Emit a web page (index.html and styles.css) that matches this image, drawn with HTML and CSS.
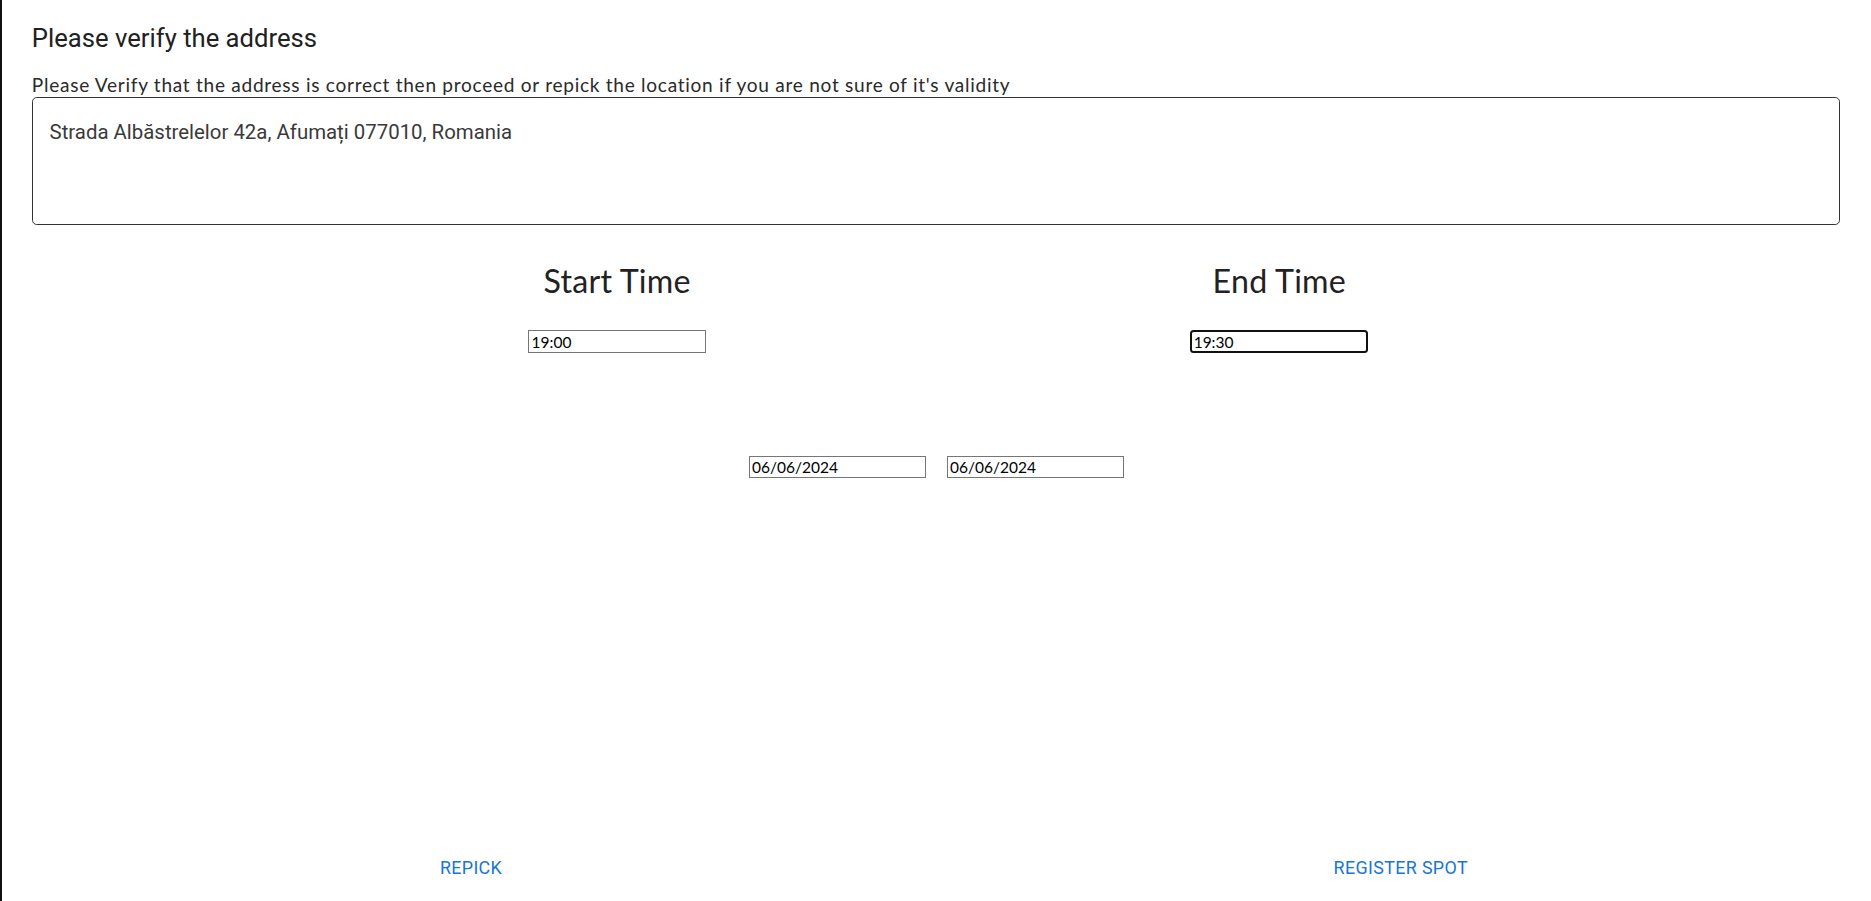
FILE: index.html
```html
<!DOCTYPE html>
<html lang="en">
<head>
<meta charset="utf-8">
<title>Verify address</title>
<link rel="stylesheet" href="styles.css">
</head>
<body>
<main class="page">
  <section class="verify">
    <h2 class="title">Please verify the address</h2>
    <p class="hint">Please Verify that the address is correct then proceed or repick the location if you are not sure of it's validity</p>
    <div class="address-field">Strada Albăstrelelor 42a, Afumați 077010, Romania</div>
  </section>
  <section class="times">
    <div class="time-col">
      <h3 class="time-title">Start Time</h3>
      <input class="field" type="text" value="19:00">
    </div>
    <div class="time-col">
      <h3 class="time-title">End Time</h3>
      <input class="field field-focus" type="text" value="19:30">
    </div>
  </section>
  <section class="dates">
    <input class="field" type="text" value="06/06/2024">
    <input class="field" type="text" value="06/06/2024">
  </section>
  <footer class="actions">
    <div class="action-cell"><button class="text-btn" type="button">Repick</button></div>
    <div class="action-cell"><button class="text-btn" type="button">Register spot</button></div>
  </footer>
</main>
</body>
</html>
```
FILE: styles.css
```css
html, body {
  margin: 0;
  padding: 0;
  background: #fff;
}
body {
  zoom: 1.19325;
}
.page {
  border-left: 2px solid #111;
  min-height: 755px;
  box-sizing: border-box;
}
.verify {
  padding: 16px 26px 0 25px;
}
.title {
  margin: 0;
  font: 400 21.5px/32px Roboto, "Liberation Sans", sans-serif;
  color: #212121;
}
.hint {
  margin: 13px 0 0;
  font: 400 16px/20px Lato, "Liberation Sans", sans-serif;
  letter-spacing: 0.6px;
  color: #2a2a2a;
}
.address-field {
  box-sizing: border-box;
  height: 108px;
  border: 1px solid #333;
  border-radius: 4px;
  padding: 17.5px 14px;
  font: 400 17.1px/23px Roboto, "Liberation Sans", sans-serif;
  color: #3a3a3a;
}
.times {
  display: flex;
  gap: 406px;
  padding-left: 441px;
  margin-top: 31px;
}
.time-col {
  width: 149px;
  display: flex;
  flex-direction: column;
  align-items: center;
}
.time-title {
  margin: 0;
  font: 400 27px/32px Lato, "Liberation Sans", sans-serif;
  letter-spacing: 0.2px;
  color: #222;
  white-space: nowrap;
}
.field {
  box-sizing: border-box;
  width: 149px;
  height: 19px;
  border: 1px solid #767676;
  border-radius: 0;
  padding: 0 2px;
  margin: 0;
  font: 400 13px/17px Lato, "Liberation Sans", sans-serif;
  color: #000;
  background: #fff;
  outline: none;
}
.time-col .field {
  margin-top: 25px;
}
.field-focus {
  border: 2px solid #111;
  border-radius: 3px;
  padding: 0 1px;
}
.dates {
  display: flex;
  justify-content: center;
  gap: 17px;
  margin-top: 86px;
}
.actions {
  display: flex;
  margin-top: 308px;
  padding: 0 4.5px 0 3.5px;
}
.action-cell {
  flex: 1;
  display: flex;
  justify-content: center;
}
.text-btn {
  background: none;
  border: 0;
  padding: 6px 8px;
  font: 400 15px/24.5px Roboto, "Liberation Sans", sans-serif;
  letter-spacing: 0.3px;
  text-transform: uppercase;
  color: #1976d2;
  cursor: pointer;
}
```
